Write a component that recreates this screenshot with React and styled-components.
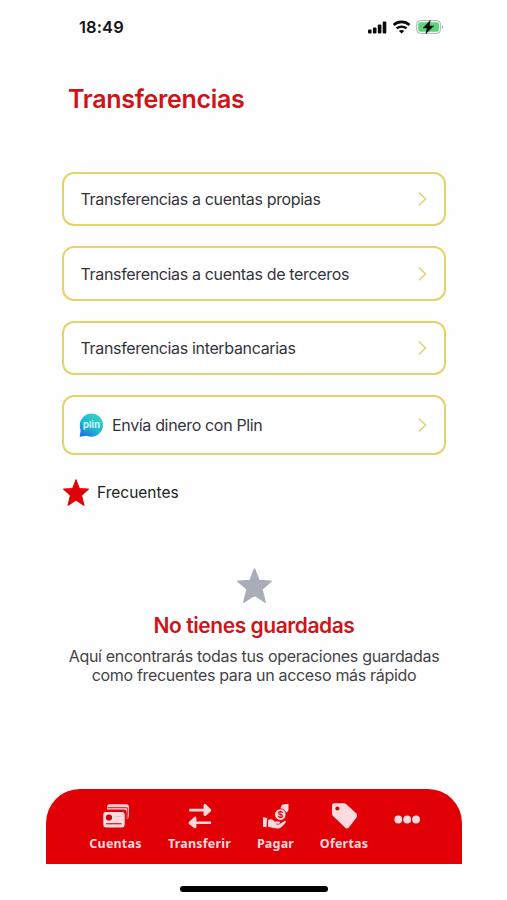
import React from 'react';
import styled, { createGlobalStyle } from 'styled-components';

const GlobalStyle = createGlobalStyle`
  * {
    box-sizing: border-box;
  }
  body {
    margin: 0;
    background: #fefefe;
    font-family: Inter, 'Liberation Sans', sans-serif;
  }
`;
const Screen = styled.div`
  width: 507px;
  height: 900px;
  padding: 0 45px 0 46px;
  display: flex;
  flex-direction: column;
  overflow: hidden;
`;
const StatusBar = styled.header`
  height: 54px;
  padding: 0 18px 0 33px;
  display: flex;
  align-items: center;
  justify-content: space-between;
`;
const Time = styled.span`
  font-size: 16.5px;
  font-weight: 600;
  color: #161616;
  letter-spacing: 0.1px;
`;
const StatusIcons = styled.div`
  display: flex;
  align-items: center;
  gap: 5px;
`;
const Title = styled.h1`
  margin: 29px 0 0 22px;
  font-size: 25px;
  line-height: 32px;
  font-weight: 600;
  letter-spacing: -0.3px;
  color: #cf1318;
`;
const Options = styled.div`
  margin: 57px 16px 0;
  display: flex;
  flex-direction: column;
  gap: 20px;
`;
const Option = styled.button`
  width: 100%;
  height: ${({ $tall }) => ($tall ? '60px' : '54.4px')};
  padding: 0 16px 0 ${({ $tall }) => ($tall ? '15px' : '16.5px')};
  display: flex;
  align-items: center;
  gap: 8px;
  border: 2px solid #e6d16c;
  border-radius: 12px;
  background: #fff;
  font-family: inherit;
`;
const OptionLabel = styled.span`
  flex: 1;
  text-align: left;
  font-size: 16px;
  letter-spacing: -0.34px;
  color: #34353b;
`;
const Frequent = styled.div`
  height: 30px;
  margin: 22px 17px 0;
  display: flex;
  align-items: center;
  gap: 8px;
  font-size: 15.5px;
  color: #222226;
`;
const Empty = styled.section`
  margin-top: 61px;
  display: flex;
  flex-direction: column;
  align-items: center;
  text-align: center;
`;
const EmptyTitle = styled.h2`
  margin: 9px 0 0;
  font-size: 21px;
  line-height: 28px;
  font-weight: 600;
  letter-spacing: -0.44px;
  color: #cf1318;
`;
const EmptyText = styled.p`
  margin: 7px 0 0;
  font-size: 16px;
  line-height: 19px;
  letter-spacing: -0.32px;
  color: #444448;
  white-space: nowrap;
`;
const TabBar = styled.nav`
  height: 75px;
  margin-top: auto;
  padding: 14px 32px 0 37px;
  display: flex;
  flex-shrink: 0;
  border-radius: 34px 34px 0 0;
  background: #e00006;
`;
const Tab = styled.div`
  width: ${({ $width }) => $width}px;
  flex-shrink: 0;
  display: flex;
  flex-direction: column;
  align-items: center;
  gap: 6px;
  white-space: nowrap;
  color: #ffd9dc;
`;
const TabLabel = styled.span`
  font-family: 'Noto Sans', 'Open Sans', sans-serif;
  font-size: 12.5px;
  line-height: 18px;
  font-weight: 700;
  letter-spacing: 0.2px;
`;
const HomeArea = styled.footer`
  height: 36px;
  flex-shrink: 0;
  display: flex;
  justify-content: center;
  padding: 22px 0 0;
`;
const HomeIndicator = styled.div`
  width: 148px;
  height: 6px;
  border-radius: 3px;
  background: #000;
`;

const SignalIcon = () => (
  <svg width="20" height="13" viewBox="0 0 20 13" fill="#0c0c0c">
    <rect x="0" y="8.5" width="3.6" height="4" rx="1" />
    <rect x="4.9" y="6.5" width="3.6" height="6" rx="1" />
    <rect x="9.8" y="3.5" width="3.6" height="9" rx="1" />
    <rect x="14.7" y="0.5" width="3.6" height="12" rx="1" />
  </svg>
);

const WifiIcon = () => (
  <svg width="18" height="14" viewBox="0 0 17 13" fill="none" stroke="#0c0c0c">
    <path d="M.6 4.6C4.8.7 11.4.7 15.6 4.6" strokeWidth="2.4" />
    <path d="M3.4 7.9C6.1 5.5 10.1 5.5 12.8 7.9" strokeWidth="2.2" />
    <path d="M8.1 12.7 5.6 10.2C7 9 9.2 9 10.6 10.2Z" fill="#0c0c0c" stroke="none" />
  </svg>
);

const BatteryIcon = () => (
  <svg width="28" height="14" viewBox="0 0 28 14">
    <rect x="0.6" y="0.6" width="24" height="12.8" rx="3.8" fill="#f5fbf6" stroke="#a9b5aa" strokeWidth="1" />
    <rect x="2.2" y="2.2" width="20.8" height="9.6" rx="2.3" fill="#5cd47c" />
    <path d="M26 5v4c1.4-.5 1.4-3.5 0-4Z" fill="#a9b5aa" />
    <path d="M14.2.4 7.2 7.9h4L9.9 13.6 17.6 6h-4.4Z" fill="#0c0c0c" stroke="#0c0c0c" strokeWidth="0.6" strokeLinejoin="round" />
  </svg>
);

const Chevron = () => (
  <svg width="10" height="16" viewBox="0 0 10 16" fill="none" stroke="#dfd568" strokeWidth="1.5">
    <path d="m.9 1.5 6.6 6.5-6.6 6.5" />
  </svg>
);

const PlinName = styled.text`
  font-family: Inter, sans-serif;
  font-size: 9.5px;
  font-weight: 600;
  fill: #e4fbff;
`;

const PlinLogo = () => (
  <svg width="25" height="25" viewBox="0 0 25 25">
    <defs>
      <linearGradient id="plin" x1="0.75" y1="0.1" x2="0.15" y2="1">
        <stop offset="0" stopColor="#31d0c3" />
        <stop offset="0.5" stopColor="#20b8d4" />
        <stop offset="1" stopColor="#1974e7" />
      </linearGradient>
    </defs>
    <path d="M12.6.5A11.6 11.6 0 0 1 24 12.2 11.6 11.6 0 0 1 12.4 23.7Q9.6 23.7 7.5 22.8L.7 23.8 1.6 17.5Q.8 15.2.8 12.3A11.8 11.8 0 0 1 12.6.5Z" fill="url(#plin)" />
    <PlinName x="4" y="14.8" textLength="17">plin</PlinName>
  </svg>
);

const Star = ({ width, height, color }) => (
  <svg width={width} height={height} viewBox="0 0 34 34" preserveAspectRatio="none" fill={color} stroke={color} strokeWidth="1.4" strokeLinejoin="round">
    <path d="M17 .9 21.4 12.1 33.2 12.8 24.2 20.5 27.4 33.2 17 26.4 6.6 33.2 9.8 20.5.8 12.8 12.6 12.1Z" />
  </svg>
);

const CardsIcon = () => (
  <svg width="28" height="26" viewBox="0 0 28 26">
    <path d="M5 6.5V4.2Q5 1.3 8 1.3H24Q27 1.3 27 4.2V13Q27 15.5 24.8 16V9.5Q24.8 6.5 21.5 6.5Z" fill="#ffd0d4" />
    <path d="M5.3 4.6H24Q25.7 4.6 25.7 6.2V15" fill="none" stroke="#d63a45" strokeWidth="1.2" />
    <rect x="0.8" y="8.5" width="22.4" height="16.5" rx="3" fill="#ffdbdd" stroke="#d90008" strokeWidth="1" />
    <circle cx="7" cy="14.5" r="3.1" fill="#c90010" />
    <path d="M13 13.5h6.5" stroke="#f3bfc4" strokeWidth="1" />
    <path d="M4 20.7h15.5" stroke="#d9303a" strokeWidth="1.4" />
  </svg>
);

const TransferIcon = () => (
  <svg width="24" height="26" viewBox="0 0 24 26" fill="currentColor">
    <path d="M1.5 5.8Q.6 7.2 1.5 8.5H15.6V12Q16.2 13.8 17.8 12.7L23 8.3Q23.8 7.3 23 6.3L17.8 1.2Q16.2.2 15.6 2V5.8Z" />
    <path d="M22.8 18.4Q23.7 19.8 22.8 21.1H8.4V24.3Q7.8 26 6.2 25L.9 20.9Q.1 19.9.9 18.9L6.2 13.9Q7.8 12.9 8.4 14.7V18.4Z" />
  </svg>
);

const DollarSign = styled.text`
  font-family: Inter, sans-serif;
  font-size: 9px;
  font-weight: 700;
  fill: #d5101a;
`;

const PayIcon = () => (
  <svg width="28" height="26" viewBox="0 0 28 26" fill="currentColor">
    <path d="M1 14.3 5.2 14.9 4.5 24.2 1 23.7Z" />
    <path d="M6.2 17Q9.5 14.8 12.4 18.4H17.2Q18.8 18.8 18 20.2 17 20.9 13.5 20.8 13.8 21.8 17.5 21.3L22.5 18Q24 17.3 24 18.8 21 23.8 17.5 25.2 14 26 6 23.7Z" />
    <path d="M18.6 6Q18.6 1.5 22.8 1.3L26.5.8V7Q25.5 9.8 23 10.2Z" />
    <circle cx="18.3" cy="11.6" r="5.8" stroke="#e00006" strokeWidth="1" />
    <DollarSign x="15.6" y="14.9">$</DollarSign>
  </svg>
);

const TagIcon = () => (
  <svg width="27" height="26" viewBox="0 0 27 26">
    <path d="M3 .3H13Q14.3.3 15.3 1.3L25 10Q26.8 12 25.6 14.5L17.8 24.5Q16 26.3 14 24.5L2 13Q1 12 1 10.8V2.3Q1 .3 3 .3Z" fill="#ffdbdd" />
    <circle cx="6.4" cy="5.6" r="2" fill="#c8000c" />
  </svg>
);

const MoreIcon = () => (
  <svg width="26" height="33" viewBox="0 0 26 33" fill="#ffdbdd">
    <circle cx="4.3" cy="16.5" r="3.9" />
    <circle cx="13.2" cy="16.5" r="3.9" />
    <circle cx="22.1" cy="16.5" r="3.9" />
  </svg>
);

const options = [
  { label: 'Transferencias a cuentas propias' },
  { label: 'Transferencias a cuentas de terceros' },
  { label: 'Transferencias interbancarias' },
  { label: 'Envía dinero con Plin', icon: <PlinLogo /> },
];

const tabs = [
  { label: 'Cuentas', width: 65, icon: <CardsIcon /> },
  { label: 'Transferir', width: 103, icon: <TransferIcon /> },
  { label: 'Pagar', width: 49, icon: <PayIcon /> },
  { label: 'Ofertas', width: 88, icon: <TagIcon /> },
  { width: 38, icon: <MoreIcon /> },
];

export default function App() {
  return (
    <>
      <GlobalStyle />
      <Screen>
        <StatusBar>
          <Time>18:49</Time>
          <StatusIcons>
            <SignalIcon />
            <WifiIcon />
            <BatteryIcon />
          </StatusIcons>
        </StatusBar>
        <Title>Transferencias</Title>
        <Options>
          {options.map((option) => (
            <Option key={option.label} $tall={Boolean(option.icon)}>
              {option.icon}
              <OptionLabel>{option.label}</OptionLabel>
              <Chevron />
            </Option>
          ))}
        </Options>
        <Frequent>
          <Star width={26} height={27} color="#df0008" />
          Frecuentes
        </Frequent>
        <Empty>
          <Star width={35} height={35} color="#a9adb8" />
          <EmptyTitle>No tienes guardadas</EmptyTitle>
          <EmptyText>
            Aquí encontrarás todas tus operaciones guardadas
            <br />
            como frecuentes para un acceso más rápido
          </EmptyText>
        </Empty>
        <TabBar>
          {tabs.map((tab) => (
            <Tab key={tab.label || 'more'} $width={tab.width}>
              {tab.icon}
              {tab.label && <TabLabel>{tab.label}</TabLabel>}
            </Tab>
          ))}
        </TabBar>
        <HomeArea>
          <HomeIndicator />
        </HomeArea>
      </Screen>
    </>
  );
}
